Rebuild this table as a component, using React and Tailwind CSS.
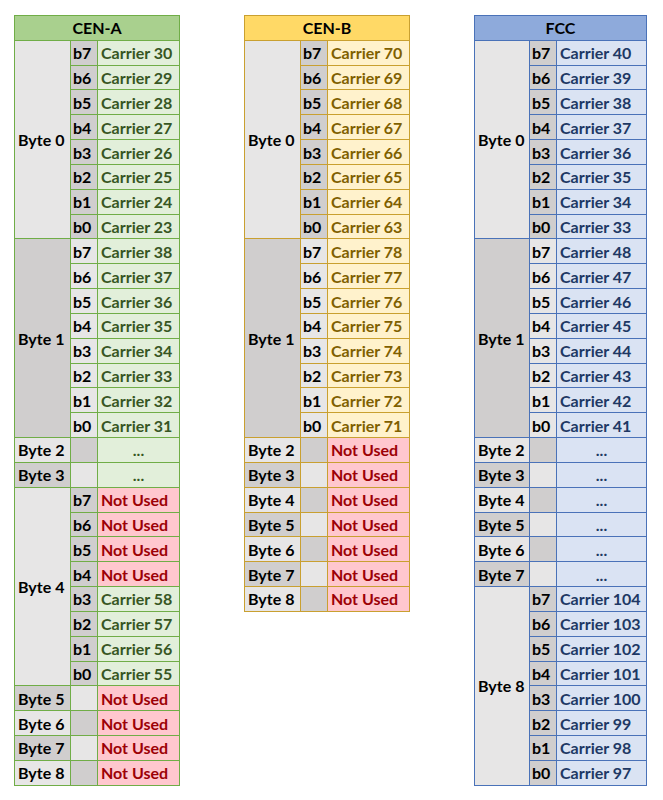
const LIGHT = "bg-[#e7e6e6]";
const DARK = "bg-[#d0cece]";

const THEMES = {
  green: {
    border: "border-[#70ad47]",
    head: "bg-[#a9d08e]",
    cell: "bg-[#e2efda] text-[#375623]",
    cols: "grid-cols-[56px_27px_82px]",
  },
  gold: {
    border: "border-[#c9a030]",
    head: "bg-[#ffd966]",
    cell: "bg-[#fff2cc] text-[#7f6000]",
    cols: "grid-cols-[56px_27px_82px]",
  },
  blue: {
    border: "border-[#4a72b8]",
    head: "bg-[#8eaadb]",
    cell: "bg-[#dae3f3] text-[#203864]",
    cols: "grid-cols-[55px_27px_90px]",
  },
};

const bits = ["b7", "b6", "b5", "b4", "b3", "b2", "b1", "b0"];

const carriers = (start) => bits.map((b, i) => ({ bit: b, value: `Carrier ${start - i}` }));
const NU = "Not Used";

const tables = [
  {
    title: "CEN-A",
    theme: "green",
    bytes: [
      { label: "Byte 0", bits: carriers(30) },
      { label: "Byte 1", bits: carriers(38) },
      { label: "Byte 2", value: "..." },
      { label: "Byte 3", value: "..." },
      {
        label: "Byte 4",
        bits: [NU, NU, NU, NU, "Carrier 58", "Carrier 57", "Carrier 56", "Carrier 55"].map((v, i) => ({
          bit: bits[i],
          value: v,
        })),
      },
      { label: "Byte 5", value: NU },
      { label: "Byte 6", value: NU },
      { label: "Byte 7", value: NU },
      { label: "Byte 8", value: NU },
    ],
  },
  {
    title: "CEN-B",
    theme: "gold",
    bytes: [
      { label: "Byte 0", bits: carriers(70) },
      { label: "Byte 1", bits: carriers(78) },
      ...[2, 3, 4, 5, 6, 7, 8].map((n) => ({ label: `Byte ${n}`, value: NU })),
    ],
  },
  {
    title: "FCC",
    theme: "blue",
    bytes: [
      { label: "Byte 0", bits: carriers(40) },
      { label: "Byte 1", bits: carriers(48) },
      ...[2, 3, 4, 5, 6, 7].map((n) => ({ label: `Byte ${n}`, value: "..." })),
      { label: "Byte 8", bits: carriers(104) },
    ],
  },
];

function ValueCell({ value, t }) {
  const notUsed = value === NU;
  const dots = value === "...";
  return (
    <div
      className={`border-r border-b ${t.border} flex items-center pt-[1px] ${dots ? "justify-center" : "pl-[3px]"} ${
        notUsed ? "bg-[#ffc7ce] text-[#9c0006]" : t.cell
      }`}
    >
      {value}
    </div>
  );
}

function ByteTable({ title, theme, bytes }) {
  const t = THEMES[theme];
  return (
    <div className={`grid ${t.cols} auto-rows-[24.84px] border-l border-t ${t.border}`}>
      <div className={`col-span-3 border-r border-b ${t.border} ${t.head} flex items-center justify-center pt-[1px]`}>
        {title}
      </div>
      {bytes.map((b, i) => {
        const byteBg = i % 2 === 0 ? LIGHT : DARK;
        const bitBg = i % 2 === 0 ? DARK : LIGHT;
        if (b.bits) {
          return [
            <div
              key={b.label}
              className={`row-span-8 col-start-1 border-r border-b ${t.border} ${byteBg} flex items-center pt-[1px] pl-[3px] text-black`}
            >
              {b.label}
            </div>,
            ...b.bits.flatMap((r) => [
              <div
                key={b.label + r.bit}
                className={`col-start-2 border-r border-b ${t.border} ${bitBg} flex items-center pt-[1px] pl-[2px] text-black`}
              >
                {r.bit}
              </div>,
              <ValueCell key={b.label + r.bit + "v"} value={r.value} t={t} />,
            ]),
          ];
        }
        return [
          <div
            key={b.label}
            className={`col-start-1 border-r border-b ${t.border} ${byteBg} flex items-center pt-[1px] pl-[3px] text-black`}
          >
            {b.label}
          </div>,
          <div key={b.label + "bit"} className={`border-r border-b ${t.border} ${bitBg}`} />,
          <ValueCell key={b.label + "v"} value={b.value} t={t} />,
        ];
      })}
    </div>
  );
}

export default function App() {
  return (
    <div
      className="w-[663px] h-[800px] bg-white flex items-start gap-[64px] pl-[14px] pt-[15px] font-bold text-[16px] leading-none"
      style={{ fontFamily: "Lato, 'Open Sans', sans-serif" }}
    >
      {tables.map((tb) => (
        <ByteTable key={tb.title} {...tb} />
      ))}
    </div>
  );
}
